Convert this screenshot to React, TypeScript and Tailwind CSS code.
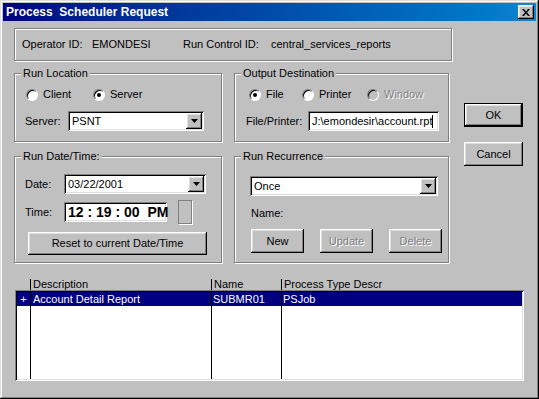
const raised =
  'bg-[#c0c0c0] shadow-[inset_-1px_-1px_0_#000000,inset_1px_1px_0_#ffffff,inset_-2px_-2px_0_#808080,inset_2px_2px_0_#dfdfdf]'
const sunken =
  'bg-white shadow-[inset_1px_1px_0_#808080,inset_-1px_-1px_0_#ffffff,inset_2px_2px_0_#000000,inset_-2px_-2px_0_#dfdfdf]'
const etched = 'border border-[#808080] shadow-[inset_1px_1px_0_#ffffff,1px_1px_0_#ffffff]'
const grayText = 'text-[#808080] [text-shadow:1px_1px_0_#ffffff]'

function Group({ title, className, children }: { title: string; className: string; children: React.ReactNode }) {
  return (
    <div className={`relative ${etched} ${className}`}>
      <span className="absolute -top-[7px] left-[6px] px-[2px] bg-[#c0c0c0] leading-[13px]">{title}</span>
      {children}
    </div>
  )
}

function Radio({ label, checked, disabled }: { label: string; checked?: boolean; disabled?: boolean }) {
  return (
    <div className="flex items-center gap-[5px]">
      <div
        className={`w-[12px] h-[12px] rounded-full border border-[#808080] border-r-white border-b-white shadow-[inset_1px_1px_0_#000000] flex items-center justify-center ${
          disabled ? 'bg-[#c0c0c0]' : 'bg-white'
        }`}
      >
        {checked && <div className="w-[4px] h-[4px] rounded-full bg-black" />}
      </div>
      <span className={`leading-[13px] ${disabled ? grayText : ''}`}>{label}</span>
    </div>
  )
}

function Combo({ value, className }: { value: string; className: string }) {
  return (
    <div className={`${sunken} h-[20px] flex items-center p-[2px] ${className}`}>
      <span className="flex-1 pl-[2px] leading-none">{value}</span>
      <div className={`${raised} w-[16px] h-[16px] flex items-center justify-center`}>
        <svg width="7" height="4" viewBox="0 0 7 4">
          <path d="M0 0h7L3.5 4z" fill="#000" />
        </svg>
      </div>
    </div>
  )
}

function Button({ label, className, disabled }: { label: string; className: string; disabled?: boolean }) {
  return (
    <div className={`${raised} flex items-center justify-center ${className}`}>
      <span className={disabled ? grayText : ''}>{label}</span>
    </div>
  )
}

export default function App() {
  return (
    <div
      className="w-[539px] h-[399px] bg-[#c0c0c0] p-[3px] text-[11px] text-black shadow-[inset_-1px_-1px_0_#000000,inset_1px_1px_0_#dfdfdf,inset_-2px_-2px_0_#808080,inset_2px_2px_0_#ffffff] overflow-hidden"
      style={{ fontFamily: '"Liberation Sans", Arial, sans-serif' }}
    >
      {/* Title bar */}
      <div className="h-[18px] flex items-center justify-between pl-[3px] pr-[2px] bg-gradient-to-r from-[#000080] to-[#1084d0]">
        <span className="text-white font-bold text-[12px] whitespace-pre leading-none">Process  Scheduler Request</span>
        <div className={`${raised} w-[16px] h-[14px] flex items-center justify-center`}>
          <svg width="8" height="7" viewBox="0 0 8 7">
            <path d="M0 0h2l2 2.5L6 0h2L5 3.5 8 7H6L4 4.5 2 7H0l3-3.5z" fill="#000" />
          </svg>
        </div>
      </div>

      <div className="pl-[11px] pt-[7px]">
        <div className="flex">
          {/* Left column */}
          <div className="w-[438px]">
            <div className={`${etched} h-[33px] flex items-center pl-[7px]`}>
              <span className="w-[70px]">Operator ID:</span>
              <span className="w-[91px]">EMONDESI</span>
              <span className="w-[88px]">Run Control ID:</span>
              <span>central_services_reports</span>
            </div>

            <div className="flex gap-[12px] mt-[12px]">
              <Group title="Run Location" className="w-[208px] h-[69px] pt-[14px] pl-[11px]">
                <div className="flex">
                  <div className="w-[67px]">
                    <Radio label="Client" />
                  </div>
                  <Radio label="Server" checked />
                </div>
                <div className="flex items-center mt-[10px] -ml-[1px]">
                  <span className="w-[43px]">Server:</span>
                  <Combo value="PSNT" className="w-[136px]" />
                </div>
              </Group>

              <Group title="Output Destination" className="w-[215px] h-[69px] pt-[14px] pl-[14px]">
                <div className="flex">
                  <div className="w-[53px]">
                    <Radio label="File" checked />
                  </div>
                  <div className="w-[65px]">
                    <Radio label="Printer" />
                  </div>
                  <Radio label="Window" disabled />
                </div>
                <div className="flex items-center mt-[10px] -ml-[3px]">
                  <span className="w-[62px]">File/Printer:</span>
                  <div className={`${sunken} w-[131px] h-[20px] flex items-center pl-[4px] overflow-hidden whitespace-nowrap`}>
                    J:\emondesir\account.rpt
                    <span className="w-[1px] h-[13px] bg-black" />
                  </div>
                </div>
              </Group>
            </div>

            <div className="flex gap-[12px] mt-[14px]">
              <Group title="Run Date/Time:" className="w-[208px] h-[107px] pt-[17px] pl-[10px]">
                <div className="flex items-center">
                  <span className="w-[39px]">Date:</span>
                  <Combo value="03/22/2001" className="w-[142px]" />
                </div>
                <div className="flex items-center mt-[6px]">
                  <span className="w-[39px]">Time:</span>
                  <div className={`${sunken} w-[103px] h-[20px] flex items-center pl-[4px]`}>
                    <span className="font-bold text-[14px] whitespace-pre leading-none">12 : 19 : 00  PM</span>
                  </div>
                  <div className="ml-[11px] w-[14px] h-[24px] border border-[#808080] shadow-[1px_1px_0_#ffffff]" />
                </div>
                <Button label="Reset to current Date/Time" className="w-[179px] h-[23px] mt-[8px] ml-[3px]" />
              </Group>

              <Group title="Run Recurrence" className="w-[215px] h-[107px] pt-[19px] pl-[15px]">
                <Combo value="Once" className="w-[188px]" />
                <div className="mt-[11px] leading-[13px] pl-[1px]">Name:</div>
                <div className="flex gap-[16px] mt-[9px] pl-[1px]">
                  <Button label="New" className="w-[53px] h-[24px]" />
                  <Button label="Update" className="w-[53px] h-[24px]" disabled />
                  <Button label="Delete" className="w-[53px] h-[24px]" disabled />
                </div>
              </Group>
            </div>
          </div>

          {/* Right column */}
          <div className="ml-[12px] mt-[75px] flex flex-col gap-[15px]">
            <div className="border border-black">
              <Button label="OK" className="w-[57px] h-[22px]" />
            </div>
            <Button label="Cancel" className="w-[59px] h-[24px]" />
          </div>
        </div>

        {/* List header */}
        <div className="flex items-end h-[14px] mt-[13px] ml-[1px] w-[509px]">
          <div className="w-[15px]" />
          <div className="w-[181px] h-[11px] border-l border-black pl-[2px] leading-[11px]">Description</div>
          <div className="w-[70px] h-[11px] border-l border-black pl-[2px] leading-[11px]">Name</div>
          <div className="flex-1 h-[11px] border-l border-black pl-[2px] leading-[11px]">Process Type Descr</div>
        </div>

        {/* List */}
        <div className={`${sunken} ml-[1px] w-[509px] h-[91px] p-[2px] flex`}>
          <div className="w-[13px] flex flex-col">
            <div className="h-[14px] bg-[#000080] text-white leading-[14px] text-center">+</div>
          </div>
          <div className="w-[181px] border-l border-black flex flex-col">
            <div className="h-[14px] bg-[#000080] text-white leading-[14px] pl-[2px]">Account Detail Report</div>
          </div>
          <div className="w-[70px] border-l border-black flex flex-col">
            <div className="h-[14px] bg-[#000080] text-white leading-[14px] pl-[1px]">SUBMR01</div>
          </div>
          <div className="flex-1 border-l border-black flex flex-col">
            <div className="h-[14px] bg-[#000080] text-white leading-[14px] pl-[1px]">PSJob</div>
          </div>
        </div>
      </div>
    </div>
  )
}
